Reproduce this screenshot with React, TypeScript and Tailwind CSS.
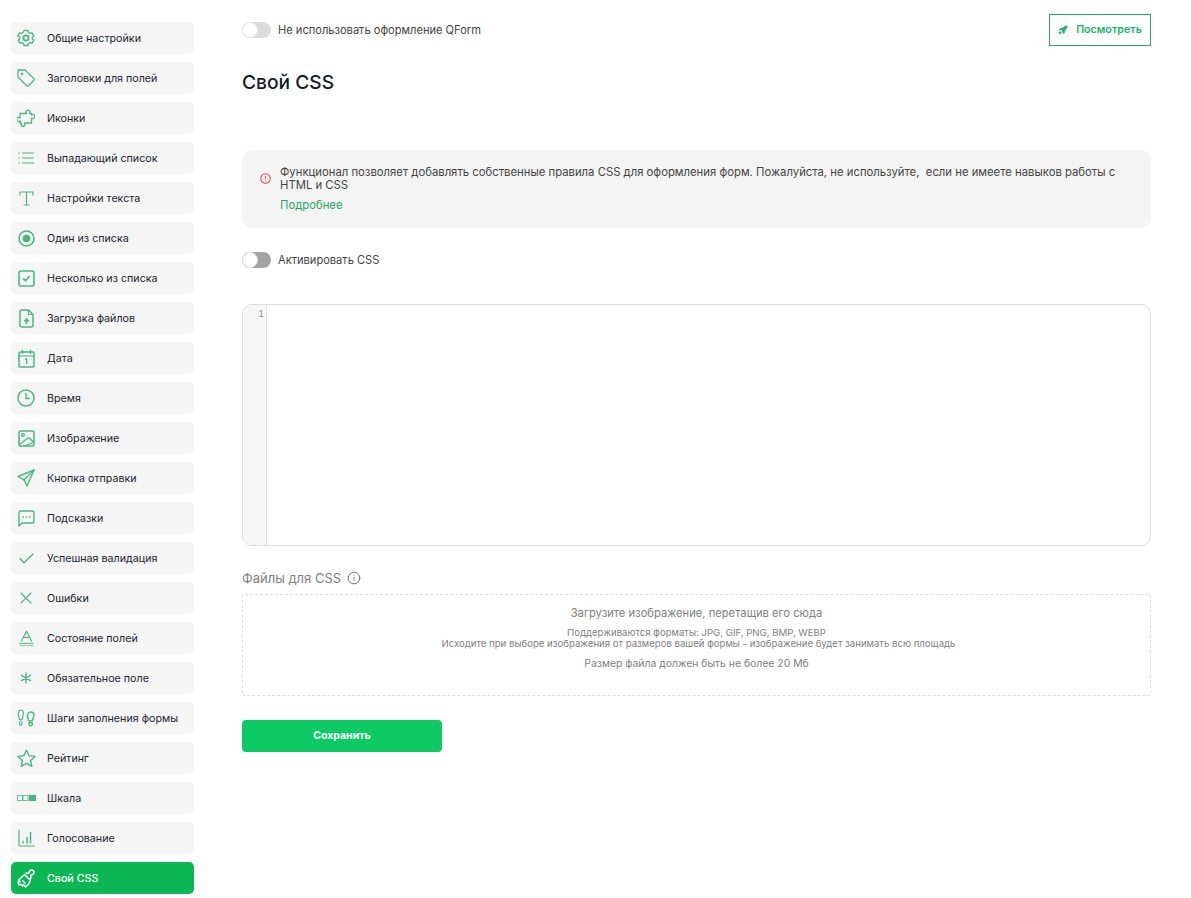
import { Info, Rocket } from "lucide-react";
import type { ReactNode } from "react";

const green = "#46b97c";

function Ico({ children, w = 18, h = 18 }: { children: ReactNode; w?: number; h?: number }) {
  return (
    <svg width={w} height={h} viewBox={`0 0 ${w} ${h}`} fill="none" stroke={green} strokeWidth="1.3" strokeLinecap="round" strokeLinejoin="round">
      {children}
    </svg>
  );
}

const icons: Record<string, ReactNode> = {
  gear: (
    <Ico>
      <path d="M7 1.5h4l.5 2 1.500.9 2-.6 1.800 3-1.500 1.400v1.600l1.500 1.400-1.800 3-2-.6-1.500.9-.5 2H7l-.5-2-1.500-.9-2 .6-1.800-3 1.500-1.400V8.200L.7 6.800l1.800-3 2 .6 1.500-.9z" />
      <circle cx="9" cy="9" r="2.600" strokeWidth="1.700" />
    </Ico>
  ),
  tag: (
    <Ico>
      <path d="M1 1h7l8.600 8.400a1.500 1.500 0 0 1 0 2.100l-5 5a1.500 1.500 0 0 1-2.100 0L1 8z" />
      <circle cx="5" cy="5" r=".6" />
    </Ico>
  ),
  puzzle: (
    <Ico>
      <path d="M3 4.500H9.500a2 2 0 1 1 3 0H14.500V6a2 2 0 1 1 0 3V14H7.500a2 2 0 1 1-3 0H3V12a2 2 0 1 1 0-3Z" />
    </Ico>
  ),
  list: (
    <Ico w={16} h={12}>
      <path d="M4.500 1h11M4.500 6h11M4.500 11h11" strokeWidth="1.200" />
      <path d="M.8 1h.8M.8 6h.8M.8 11h.8" strokeWidth="1" />
    </Ico>
  ),
  text: (
    <Ico w={15} h={15}>
      <path d="M1 4V1h13v3M7.500 1v13M5 14h5" strokeWidth="1.200" />
    </Ico>
  ),
  radio: (
    <Ico w={17} h={17}>
      <circle cx="8.500" cy="8.500" r="7.500" strokeWidth="1.500" />
      <circle cx="8.500" cy="8.500" r="3.800" fill={green} stroke="none" />
    </Ico>
  ),
  check: (
    <Ico w={17} h={17}>
      <rect x="1" y="1" width="15" height="15" rx="2" strokeWidth="1.600" />
      <path d="M5.500 8.800l2 2 3.800-4.300" strokeWidth="1.600" />
    </Ico>
  ),
  upload: (
    <Ico w={15} h={19}>
      <path d="M3 1h6.500L14 5.500V16a2 2 0 0 1-2 2H3a2 2 0 0 1-2-2V3a2 2 0 0 1 2-2z" strokeWidth="1.500" />
      <path d="M9.500 1v4.500H14" strokeWidth="1.100" />
      <path d="M7.500 14.500v-4M5.600 12l1.900-2 1.900 2" strokeWidth="1.700" />
    </Ico>
  ),
  date: (
    <Ico w={17} h={19}>
      <rect x="1" y="3" width="15" height="15" rx="1.500" strokeWidth="1.500" />
      <path d="M1 7h15M4.500 1v3.500M12.500 1v3.500" strokeWidth="1.200" />
      <path d="M7.500 10.500l1.200-.7v5" strokeWidth="1.300" />
    </Ico>
  ),
  clock: (
    <Ico>
      <circle cx="9" cy="9" r="8" strokeWidth="1.500" />
      <path d="M9 4.500v5h3.300" strokeWidth="1.500" />
    </Ico>
  ),
  image: (
    <Ico w={17} h={17}>
      <rect x="1" y="1" width="15" height="15" rx="1.200" strokeWidth="1.500" />
      <circle cx="5" cy="5" r="1.400" />
      <path d="M1.500 14.500L10.500 7.500l5 4.500M7.500 15.500l8-3" />
    </Ico>
  ),
  send: (
    <Ico>
      <path d="M17 1L1 7.500l6 3.300L10 17z" strokeWidth="1.400" />
      <path d="M7 10.800L17 1" />
    </Ico>
  ),
  hint: (
    <Ico w={17} h={17}>
      <path d="M2.500 1h12A1.500 1.500 0 0 1 16 2.500v9a1.500 1.500 0 0 1-1.500 1.500H4L1 16V2.500A1.500 1.500 0 0 1 2.500 1z" strokeWidth="1.400" />
      <path d="M5 7h.5M8.300 7h.5M11.600 7h.5" />
    </Ico>
  ),
  ok: (
    <Ico w={15} h={11}>
      <path d="M1 5.500L5 9.800L14 1" strokeWidth="1.300" />
    </Ico>
  ),
  x: (
    <Ico w={12} h={12}>
      <path d="M1 1l10 10M11 1L1 11" strokeWidth="1.200" />
    </Ico>
  ),
  state: (
    <Ico w={15} h={17}>
      <path d="M2.500 11L7.500 1l5 10M4.300 7.500h6.400" strokeWidth="1.100" />
      <path d="M.8 13.300h13.400" strokeWidth="1" />
      <path d="M.8 15.500q1.100-1 2.200 0t2.200 0 2.300 0 2.200 0 2.200 0 2.300 0" strokeWidth=".8" />
    </Ico>
  ),
  star6: (
    <Ico w={12} h={12}>
      <path d="M6 1v10M1.500 3.400l9 5.200M10.500 3.400l-9 5.200" strokeWidth="1.400" />
    </Ico>
  ),
  steps: (
    <Ico w={19} h={18}>
      <path d="M4 1C5.800 1 6.700 3 6.300 5.500 6 7.400 5.600 8.500 5.400 10c-.2 1.200-2.800 1.200-3.100 0C1.900 8 1 6.800 1.200 4.700 1.400 2.500 2.300 1 4 1z" strokeWidth="1.100" />
      <path d="M2.700 13h2.200c.5 0 .3 3.500-1.100 3.500S2.200 13 2.700 13z" strokeWidth="1.100" />
      <path d="M13.500 3c-2.200 0-3.300 2-3 4.200.2 1.700.8 2.800 1 4.100.2 1 3.700 1 4 0 .3-1.500 1.500-2.700 1.400-4.700C17.800 4.700 15.700 3 13.500 3z" strokeWidth="1.400" />
      <path d="M12 13.800h3.300V15c0 2.500-3.300 2.500-3.300 0z" strokeWidth="1.400" />
    </Ico>
  ),
  star: (
    <Ico w={19} h={19}>
      <path d="M9.500 1.200l2.500 5.400 6 .8-4.400 4 1.200 6L9.500 14.400l-5.300 3 1.200-6L1 7.400l6-.8z" strokeWidth="1.400" />
    </Ico>
  ),
  scale: (
    <svg width="19" height="6" viewBox="0 0 19 6" fill="none">
      <rect x=".5" y=".5" width="5" height="5" stroke={green} strokeWidth=".8" />
      <rect x="6" y=".5" width="5" height="5" stroke={green} strokeWidth=".8" />
      <rect x="12" y="0" width="7" height="6" fill={green} />
    </svg>
  ),
  chart: (
    <Ico w={17} h={18}>
      <path d="M1 1v15a1 1 0 0 0 1 1h14.500" strokeWidth="1.200" />
      <path d="M5 12.500v1.500M9 8.500v5.500M12.500 3.500V14" strokeWidth="1.500" />
    </Ico>
  ),
  brush: (
    <svg width="19" height="19" viewBox="0 0 19 19" fill="none" stroke="#ffffff" strokeWidth="1.500" strokeLinejoin="round" strokeLinecap="round">
      <path d="M7.500 5.500l6 6C12.500 14 10.500 16.500 8.500 18l-2-2.500-1 1.500-2-2-1.500 1-1-2.500 2-1-1.500-1.500C3.500 9.500 5.500 7.500 7.500 5.500z" />
      <path d="M9 4l2.500.5c.5-1.500 1-3 2.500-3.500 1.500-.5 3.500 1.500 3 3-.5 1.500-2 2-3.500 2.500l.5 2.500-1 1" />
      <path d="M5.500 11.500l2.500 2.500" strokeWidth="1.200" />
    </svg>
  ),
};

const items: [string, string][] = [
  ["gear", "Общие настройки"],
  ["tag", "Заголовки для полей"],
  ["puzzle", "Иконки"],
  ["list", "Выпадающий список"],
  ["text", "Настройки текста"],
  ["radio", "Один из списка"],
  ["check", "Несколько из списка"],
  ["upload", "Загрузка файлов"],
  ["date", "Дата"],
  ["clock", "Время"],
  ["image", "Изображение"],
  ["send", "Кнопка отправки"],
  ["hint", "Подсказки"],
  ["ok", "Успешная валидация"],
  ["x", "Ошибки"],
  ["state", "Состояние полей"],
  ["star6", "Обязательное поле"],
  ["steps", "Шаги заполнения формы"],
  ["star", "Рейтинг"],
  ["scale", "Шкала"],
  ["chart", "Голосование"],
];

function Toggle({ dark }: { dark?: boolean }) {
  return (
    <span className={`relative block h-4 w-[29px] rounded-full ${dark ? "bg-[#a3a3a3]" : "bg-[#dcdcdc]"}`}>
      <span className="absolute left-0 top-0 h-4 w-4 rounded-full border border-[#e8e8e8] bg-white" />
    </span>
  );
}

export default function App() {
  return (
    <div className="flex min-h-[898px] bg-white font-['Inter',sans-serif] text-[#1c2430]">
      <aside className="flex w-[242px] shrink-0 flex-col gap-2 pl-[11px] pr-[48px] pt-[22px]">
        {items.map(([icon, label]) => (
          <div key={label} className="flex h-8 items-center rounded-[5px] bg-[#f5f5f5] text-[10.7px]">
            <span className="flex w-9 shrink-0 justify-center pr-[6px]">{icons[icon]}</span>
            <span className="pt-[2px]">{label}</span>
          </div>
        ))}
        <div className="flex h-8 items-center rounded-[5px] bg-[#0cb655] text-[10.7px] font-medium text-white">
          <span className="flex w-9 shrink-0 justify-center pr-[6px]">{icons.brush}</span>
          <span className="pt-[2px]">Свой CSS</span>
        </div>
      </aside>

      <main className="w-[909px] pt-[14px]">
        <div className="flex items-start justify-between">
          <div className="flex h-8 items-center gap-[7px] text-[11.1px] text-[#444]">
            <Toggle />
            <span>Не использовать оформление QForm</span>
          </div>
          <button className="flex h-8 w-[102px] items-center justify-center gap-2 border border-[#21a866] text-[10.7px] font-semibold text-[#16b463]">
            <Rocket size={10} fill="#16b463" strokeWidth={1.5} />
            Посмотреть
          </button>
        </div>

        <h1 className="mt-6 text-[19.2px] font-medium leading-[24px] text-[#101c24]">Свой CSS</h1>

        <div className="mt-14 flex h-[78px] gap-[9px] rounded-[10px] bg-[#f4f4f4] pl-[18px] pr-[30px] pt-4">
          <svg className="mt-[7px] shrink-0" width="11" height="11" viewBox="0 0 12 12" fill="none" stroke="#e5484d" strokeWidth="1.100">
            <circle cx="6" cy="6" r="5.200" />
            <path d="M6 3v3.500M6 8.300v.6" />
          </svg>
          <div className="text-[11.3px] leading-[13px] text-[#444]">
            <p>Функционал позволяет добавлять собственные правила CSS для оформления форм. Пожалуйста, не используйте,&nbsp; если не имеете навыков работы с HTML и CSS</p>
            <p className="mt-[7px] text-[#1fa862]">Подробнее</p>
          </div>
        </div>

        <div className="mt-6 flex items-center gap-[7px] text-[11.1px] text-[#444]">
          <Toggle dark />
          <span>Активировать CSS</span>
        </div>

        <div className="mt-[35px] flex h-[242px] overflow-hidden rounded-[10px] border border-[#dcdcdc]">
          <div className="w-6 border-r border-[#dfdfdf] bg-[#f7f7f7] pr-[2px] pt-[3px] text-right font-['Liberation_Mono',monospace] text-[10px] leading-[14px] text-[#9a9a9a]">1</div>
          <div className="flex-1" />
        </div>

        <div className="mt-[23px] flex items-center gap-[6px] text-[13px] font-normal leading-[18px] text-[#808080]">
          <span>Файлы для CSS</span>
          <Info size={14} strokeWidth={1.6} className="text-[#666]" />
        </div>

        <div className="mt-[7px] flex h-[102px] flex-col items-center rounded-[3px] border border-dashed border-[#dcdcdc] pt-[11px] text-center text-[#808080]">
          <p className="text-[11.2px] leading-[14px]">Загрузите изображение, перетащив его сюда</p>
          <p className="mt-[7px] text-[9.6px] leading-[11px]">
            Поддерживаются форматы: JPG, GIF, PNG, BMP, WEBP
            <span className="block pl-[4px]">Исходите при выборе изображения от размеров вашей формы - изображение будет занимать всю площадь</span>
          </p>
          <p className="mt-[9px] text-[10.4px] leading-[12px]">Размер файла должен быть не более 20 Мб</p>
        </div>

        <button className="mt-6 block h-8 w-[200px] rounded-[4px] bg-[#0dca65] text-[10.5px] font-bold text-white">Сохранить</button>
      </main>
    </div>
  );
}
